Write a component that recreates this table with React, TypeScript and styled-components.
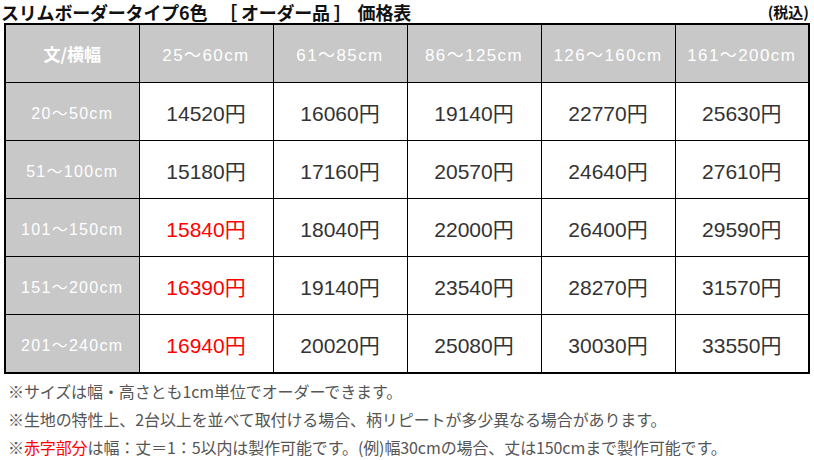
import React from 'react';
import styled, { createGlobalStyle } from 'styled-components';

const GlobalStyle = createGlobalStyle`
  html, body {
    margin: 0;
    padding: 0;
    background: #fff;
  }
  body {
    font-family: "Noto Sans CJK JP", "Noto Sans", sans-serif;
  }
`;

const Page = styled.div`
  width: 814px;
  height: 460px;
  padding: 0 0 0 1px;
  box-sizing: border-box;
`;

const TitleBar = styled.div`
  display: flex;
  justify-content: space-between;
  align-items: flex-end;
  width: 808px;
  height: 23px;
`;

const Title = styled.h1`
  margin: 0;
  font-size: 18px;
  line-height: 22px;
  font-weight: 700;
  color: #111;
  letter-spacing: -0.2px;
`;

const Bracket = styled.span`
  margin-left: 12px;
  margin-right: 6px;
`;

const TaxNote = styled.span`
  font-size: 15px;
  line-height: 22px;
  font-weight: 700;
  color: #111;
`;

const PriceTable = styled.table`
  width: 806px;
  margin-left: 3px;
  border-collapse: collapse;
  table-layout: fixed;
  border: 2px solid #000;
`;

const HeadCell = styled.th<{ $corner?: boolean }>`
  height: 57px;
  padding: 0;
  background: #c8c8c8;
  color: #fff;
  border: 1px solid #000;
  border-bottom: 1px ${({ $corner }) => ($corner ? 'solid' : 'dotted')} #000;
  font-family: ${({ $corner }) =>
    $corner ? '"Noto Sans CJK JP", sans-serif' : '"Liberation Sans", "Noto Sans CJK JP", sans-serif'};
  font-size: 17px;
  font-weight: ${({ $corner }) => ($corner ? 700 : 400)};
  letter-spacing: ${({ $corner }) => ($corner ? '0' : '1.4px')};
  text-align: center;
`;

const RowHead = styled.th`
  height: 57px;
  padding: 0;
  background: #c8c8c8;
  color: #fff;
  border: 1px solid #000;
  font-family: "Liberation Sans", "Noto Sans CJK JP", sans-serif;
  font-size: 16px;
  font-weight: 400;
  letter-spacing: 1.3px;
  text-align: center;
`;

const PriceCell = styled.td<{ $red?: boolean }>`
  padding: 0;
  border: 1px solid #000;
  color: ${({ $red }) => ($red ? '#ff0000' : '#333')};
  font-family: "Liberation Sans", "Noto Sans CJK JP", sans-serif;
  font-size: 21px;
  text-align: center;
`;

const Notes = styled.ul`
  list-style: none;
  margin: 3px 0 0 7px;
  padding: 0;
`;

const Note = styled.li`
  font-size: 16px;
  line-height: 28px;
  color: #555;
  letter-spacing: -0.1px;
`;

const Red = styled.span`
  color: #ff0000;
`;

const widths = ['25～60cm', '61～85cm', '86～125cm', '126～160cm', '161～200cm'];

const rows: { label: string; prices: number[]; red?: boolean }[] = [
  { label: '20～50cm', prices: [14520, 16060, 19140, 22770, 25630] },
  { label: '51～100cm', prices: [15180, 17160, 20570, 24640, 27610] },
  { label: '101～150cm', prices: [15840, 18040, 22000, 26400, 29590], red: true },
  { label: '151～200cm', prices: [16390, 19140, 23540, 28270, 31570], red: true },
  { label: '201～240cm', prices: [16940, 20020, 25080, 30030, 33550], red: true },
];

const App = () => (
  <Page>
    <GlobalStyle />
    <TitleBar>
      <Title>
        スリムボーダータイプ6色<Bracket>［ オーダー品 ］</Bracket>価格表
      </Title>
      <TaxNote>(税込)</TaxNote>
    </TitleBar>
    <PriceTable>
      <colgroup>
        <col style={{ width: 134 }} />
        {widths.map(w => <col key={w} />)}
      </colgroup>
      <thead>
        <tr>
          <HeadCell $corner>文/横幅</HeadCell>
          {widths.map(w => <HeadCell key={w}>{w}</HeadCell>)}
        </tr>
      </thead>
      <tbody>
        {rows.map(r => (
          <tr key={r.label}>
            <RowHead>{r.label}</RowHead>
            {r.prices.map((p, i) => (
              <PriceCell key={i} $red={r.red && i === 0}>{p}円</PriceCell>
            ))}
          </tr>
        ))}
      </tbody>
    </PriceTable>
    <Notes>
      <Note>※サイズは幅・高さとも1cm単位でオーダーできます。</Note>
      <Note>※生地の特性上、2台以上を並べて取付ける場合、柄リピートが多少異なる場合があります。</Note>
      <Note>※<Red>赤字部分</Red>は幅：丈＝1：5以内は製作可能です。(例)幅30cmの場合、丈は150cmまで製作可能です。</Note>
    </Notes>
  </Page>
);

export default App;
